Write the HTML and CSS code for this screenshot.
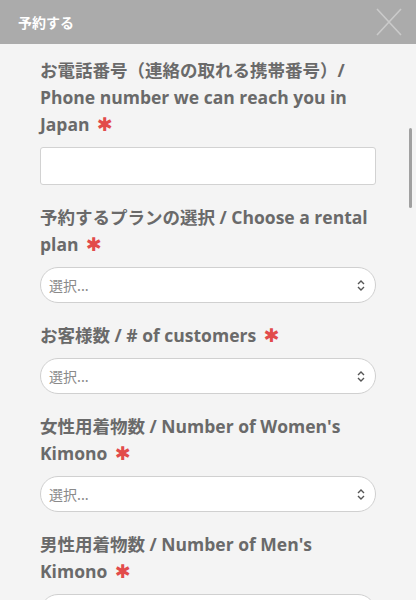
FILE: index.html
```html
<!DOCTYPE html>
<html lang="ja">
<head>
<meta charset="utf-8">
<title>予約する</title>
<link rel="stylesheet" href="styles.css">
</head>
<body>
<div class="modal">
  <header class="modal-header">
    <h1 class="modal-title">予約する</h1>
    <button class="close" aria-label="close">
      <svg width="26" height="28" viewBox="0 0 26 28"><path d="M1 1 L25 27 M25 1 L1 27" stroke="#cacaca" stroke-width="1.6" fill="none"/></svg>
    </button>
  </header>
  <div class="modal-body">
    <form class="form">
      <div class="field">
        <label class="label">お電話番号（連絡の取れる携帯番号）/ Phone number we can reach you in Japan <span class="req">✱</span></label>
        <input class="input" type="text">
      </div>
      <div class="field">
        <label class="label">予約するプランの選択 / Choose a rental plan <span class="req">✱</span></label>
        <div class="select"><span class="placeholder">選択...</span>
          <svg class="chev" width="8" height="11" viewBox="0 0 8 11"><path d="M1 4 L4 1 L7 4 M1 7 L4 10 L7 7" stroke="#555" stroke-width="1.4" fill="none"/></svg>
        </div>
      </div>
      <div class="field">
        <label class="label">お客様数 / # of customers <span class="req">✱</span></label>
        <div class="select"><span class="placeholder">選択...</span>
          <svg class="chev" width="8" height="11" viewBox="0 0 8 11"><path d="M1 4 L4 1 L7 4 M1 7 L4 10 L7 7" stroke="#555" stroke-width="1.4" fill="none"/></svg>
        </div>
      </div>
      <div class="field">
        <label class="label">女性用着物数 / Number of Women's Kimono <span class="req">✱</span></label>
        <div class="select"><span class="placeholder">選択...</span>
          <svg class="chev" width="8" height="11" viewBox="0 0 8 11"><path d="M1 4 L4 1 L7 4 M1 7 L4 10 L7 7" stroke="#555" stroke-width="1.4" fill="none"/></svg>
        </div>
      </div>
      <div class="field">
        <label class="label">男性用着物数 / Number of Men's Kimono <span class="req">✱</span></label>
        <div class="select"><span class="placeholder">選択...</span>
          <svg class="chev" width="8" height="11" viewBox="0 0 8 11"><path d="M1 4 L4 1 L7 4 M1 7 L4 10 L7 7" stroke="#555" stroke-width="1.4" fill="none"/></svg>
        </div>
      </div>
    </form>
    <div class="scrollbar"></div>
  </div>
</div>
</body>
</html>
```
FILE: styles.css
```css
html, body {
  margin: 0;
  padding: 0;
  height: 600px;
  overflow: hidden;
}
body {
  background: #f4f4f4;
  font-family: "Open Sans", "Noto Sans CJK JP", sans-serif;
}
.modal {
  display: flex;
  flex-direction: column;
  height: 600px;
  overflow: hidden;
}
.modal-header {
  height: 44px;
  background: #ababab;
  display: flex;
  align-items: center;
  justify-content: space-between;
  padding: 0 14px 0 18px;
  flex-shrink: 0;
}
.modal-title {
  margin: 0;
  font-size: 14px;
  font-weight: 700;
  color: #ffffff;
  font-family: "Noto Sans CJK JP", sans-serif;
}
.close {
  background: none;
  border: 0;
  padding: 0;
  width: 26px;
  height: 28px;
  display: flex;
}
.modal-body {
  position: relative;
  flex: 1;
  min-height: 0;
  padding: 13px 40px 0 40px;
}
.form {
  display: flex;
  flex-direction: column;
  gap: 19px;
}
.field {
  display: flex;
  flex-direction: column;
  gap: 9px;
}
.label {
  font-size: 17.5px;
  line-height: 27px;
  font-weight: 700;
  color: #6a6a6a;
  font-family: "Open Sans", "Noto Sans CJK JP", sans-serif;
}
.req {
  color: #e24b4b;
  font-family: "DejaVu Sans", sans-serif;
  font-size: 19px;
  line-height: 1;
  margin-left: 3px;
}
.input {
  box-sizing: border-box;
  height: 38px;
  width: 100%;
  background: #fff;
  border: 1px solid #d2d2d2;
  border-radius: 3px;
  margin: 0;
  flex-shrink: 0;
}
.select {
  box-sizing: border-box;
  height: 36px;
  flex-shrink: 0;
  background: #fff;
  border: 1px solid #d0d0d0;
  border-radius: 18px;
  display: flex;
  align-items: center;
  justify-content: space-between;
  padding: 0 10px 0 8px;
}
.placeholder {
  font-size: 14px;
  color: #8a8a8a;
  font-family: "Noto Sans CJK JP", sans-serif;
}
.scrollbar {
  position: absolute;
  right: 4px;
  top: 84px;
  width: 3px;
  height: 80px;
  background: #a0a0a0;
  border-radius: 2px;
}
```
